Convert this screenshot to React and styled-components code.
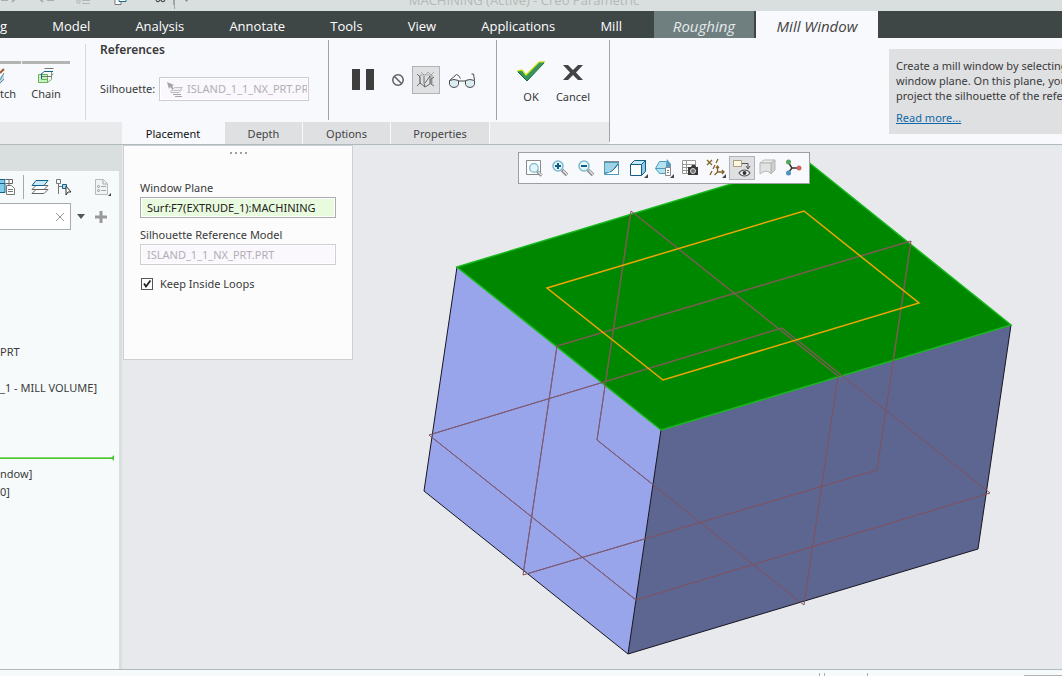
import React, { useState } from "react";
import styled, { createGlobalStyle } from "styled-components";

const GlobalStyle = createGlobalStyle`
  * {
    box-sizing: border-box;
  }

  body {
    margin: 0;
    overflow: hidden;
    font-family: "Noto Sans", "Open Sans", sans-serif;
    font-size: 11px;
    line-height: 16px;
    color: #3a3a3a;
  }

  button,
  input {
    font: inherit;
    color: inherit;
  }

  svg {
    display: block;
    flex: none;
  }
`;

const Page = styled.div`
  display: flex;
  flex-direction: column;
  height: 100vh;
  overflow: hidden;
  background-color: #f8f9fc;
`;

const TitleBar = styled.header`
  position: relative;
  display: flex;
  align-items: flex-end;
  height: 11px;
  flex: none;
  overflow: hidden;
  background-color: #d9dfde;
`;

const Title = styled.div`
  position: absolute;
  left: 0;
  right: 0;
  bottom: 3px;
  padding-right: 14px;
  text-align: center;
  font-family: "Open Sans", sans-serif;
  font-size: 13px;
  line-height: 16px;
  color: #b4b8b7;
`;

const MenuBar = styled.nav`
  display: flex;
  height: 27px;
  flex: none;
  background-color: #3e4646;
`;

const Menus = styled.div`
  display: flex;
  justify-content: space-between;
  width: 654px;
  flex: none;
  padding-right: 32px;
`;

const Menu = styled.button`
  padding: 2px 0 0;
  border: none;
  background: none;
  color: #ffffff;
  font-family: "Open Sans", sans-serif;
  font-size: 13px;
  white-space: nowrap;
  cursor: pointer;
`;

const ContextTab = styled.button`
  width: ${(props) => (props.$active ? "122px" : "102px")};
  padding: 2px 0 0;
  border: none;
  border-right: ${(props) => (props.$active ? "none" : "2px solid #3e4646")};
  background-color: ${(props) => (props.$active ? "#f8f9fc" : "#6f7f80")};
  color: ${(props) => (props.$active ? "#444444" : "#e4eaea")};
  font-family: "Open Sans", sans-serif;
  font-size: 15px;
  font-style: italic;
  white-space: nowrap;
  cursor: pointer;
`;

const Ribbon = styled.section`
  display: flex;
  height: 107px;
  flex: none;
  border-bottom: 1px solid #b0babc;
`;

const Dashboard = styled.div`
  display: flex;
  flex-direction: column;
  width: 609px;
  flex: none;
`;

const Tools = styled.div`
  display: flex;
  height: 84px;
`;

const Divider = styled.div`
  width: 1px;
  margin: ${(props) => props.$inset || "2px"} 0 2px;
  flex: none;
  background-color: ${(props) => props.$color || "#9ea3a6"};
`;

const CurveTools = styled.div`
  display: flex;
  gap: 1px;
  width: 85px;
  padding-top: 23px;
`;

const ToolButton = styled.button`
  display: flex;
  flex-direction: column;
  align-items: ${(props) => props.$align || "center"};
  gap: 2px;
  width: ${(props) => props.$width};
  height: 42px;
  padding: 4px 0 0;
  border: none;
  border-top: 3px solid #b4b4b4;
  background: none;
  white-space: nowrap;
`;

const References = styled.div`
  display: flex;
  flex-direction: column;
  gap: 19px;
  flex: 1;
  padding: 4px 19px 0 14px;
`;

const Heading = styled.h2`
  margin: 0;
  font-size: 12px;
  font-weight: 600;
  line-height: 16px;
`;

const SilhouetteRow = styled.div`
  display: flex;
  align-items: center;
  justify-content: space-between;
`;

const Collector = styled.div`
  display: flex;
  align-items: center;
  gap: 4px;
  width: 150px;
  height: 24px;
  padding: 0 1px 0 7px;
  border: 1px solid #c9cfd1;
  background-color: #faf7fd;
  box-shadow: inset 0 0 0 1px #ffffff;
`;

const CollectorInput = styled.input`
  min-width: 0;
  flex: 1;
  padding: 0;
  border: none;
  outline: none;
  background: none;
  color: #b3aeb5;
`;

const Preview = styled.div`
  display: flex;
  align-items: center;
  width: 167px;
  padding: 0 12px 0 21px;
`;

const IconButton = styled.button`
  display: flex;
  align-items: center;
  justify-content: center;
  width: ${(props) => props.$size || "26px"};
  height: ${(props) => props.$height || props.$size || "26px"};
  flex: none;
  padding: 0;
  border: 1px solid ${(props) => (props.$pressed ? "#b0b3b5" : "transparent")};
  background-color: ${(props) => (props.$pressed ? "#dfe0e2" : "transparent")};
  cursor: pointer;
`;

const Actions = styled.div`
  display: flex;
  gap: 2px;
  flex: none;
  width: 112px;
  padding: 23px 0 0 14px;
`;

const ActionButton = styled.button`
  display: flex;
  flex-direction: column;
  align-items: center;
  gap: 6px;
  width: 40px;
  height: 46px;
  padding: 0;
  border: none;
  background: none;
  cursor: pointer;
`;

const Tabs = styled.div`
  display: flex;
  gap: 1px;
  height: 22px;
  padding-left: 122px;
  background: linear-gradient(to right, #e9eaeb 122px, #f8f9fc 122px);
`;

const Tab = styled.button`
  width: ${(props) => props.$width};
  padding: 2px 0 0;
  border: none;
  background-color: ${(props) => (props.$active ? "#f8f9fc" : "#dfe0e2")};
  color: ${(props) => (props.$active ? "#111111" : "#444444")};
  cursor: pointer;
`;

const TabsRest = styled.div`
  flex: 1;
  background-color: #e9eaeb;
`;

const Help = styled.aside`
  min-width: 0;
  flex: 1;
  height: 85px;
  margin: 11px 0 0 279px;
  padding: 9px 0 0 7px;
  overflow: hidden;
  background-color: #dfe0e2;
  line-height: 15px;
  white-space: nowrap;
`;

const HelpLink = styled.a`
  display: block;
  margin-top: 7px;
  color: #0f67a6;
`;

const Body = styled.main`
  display: flex;
  min-height: 0;
  flex: 1;
`;

const Sidebar = styled.aside`
  display: flex;
  flex-direction: column;
  width: 122px;
  flex: none;
  padding-top: 26px;
  border-right: 3px solid #d9dfde;
  background-color: #f6fafb;
  background-image: linear-gradient(#d9dfde 26px, transparent 26px);
`;

const TreeTools = styled.div`
  display: flex;
  align-items: center;
  height: 32px;
  padding-right: 8px;
`;

const TreeDivider = styled.div`
  width: 1px;
  height: 24px;
  margin: 0 7px;
  background-color: #a5acae;
`;

const Spacer = styled.div`
  flex: 1;
`;

const SearchRow = styled.div`
  display: flex;
  align-items: center;
`;

const SearchBox = styled.div`
  display: flex;
  align-items: center;
  justify-content: flex-end;
  width: 71px;
  height: 27px;
  border: 1px solid #a5acae;
  border-left: none;
  background-color: #ffffff;
`;

const SearchInput = styled.input`
  width: 50px;
  border: none;
  outline: none;
  background: none;
`;

const Tree = styled.ul`
  margin: 0;
  padding: 113px 0 0;
  list-style: none;
`;

const TreeItem = styled.li`
  height: 18px;
  line-height: 18px;
  white-space: pre;
`;

const InsertMark = styled.li`
  display: flex;
  align-items: center;
  height: 14px;
`;

const Viewport = styled.div`
  position: relative;
  min-width: 0;
  flex: 1;
  background-color: #e8e9ed;
`;

const Scene = styled.svg`
  width: 100%;
  height: 100%;
`;

const ViewToolbar = styled.div`
  position: absolute;
  top: 7px;
  left: 396px;
  display: flex;
  align-items: center;
  width: 292px;
  height: 32px;
  padding-left: 2px;
  border: 1px solid #9b9da0;
  background-color: #f8f9fc;
`;

const Panel = styled.form`
  position: absolute;
  top: 0;
  left: 1px;
  display: flex;
  flex-direction: column;
  width: 230px;
  height: 215px;
  padding: 6px 16px 0;
  border: 1px solid #cdd0d3;
  background-color: #fcfcfc;
`;

const Grip = styled.div`
  display: flex;
  justify-content: center;
  gap: 3px;
  height: 28px;
`;

const Dot = styled.span`
  width: 2px;
  height: 2px;
  background-color: #a0a0a0;
`;

const Label = styled.label`
  white-space: nowrap;
`;

const Field = styled.input`
  width: 196px;
  height: 21px;
  margin: 1px 0 9px;
  padding: 0 6px;
  border: 1px solid ${(props) => (props.$active ? "#a9adaf" : "#cdd0d3")};
  outline: none;
  background-color: ${(props) => (props.$active ? "#e9fbde" : "#faf7fd")};
  box-shadow: inset 0 0 0 1px #ffffff;
  color: ${(props) => (props.$active ? "#222222" : "#b3aeb5")};
`;

const CheckRow = styled.div`
  display: flex;
  align-items: center;
  gap: 7px;
  margin-top: 2px;
  padding-left: 1px;
`;

const Checkbox = styled.input`
  appearance: none;
  width: 12px;
  height: 12px;
  margin: 0;
  border: 1px solid #555555;
  background-color: #ffffff;

  &:not(:checked) + svg {
    display: none;
  }
`;

const CheckWrap = styled.span`
  position: relative;
  display: flex;

  svg {
    position: absolute;
    inset: 0;
    pointer-events: none;
  }
`;

const StatusBar = styled.footer`
  display: flex;
  justify-content: flex-end;
  height: 7px;
  flex: none;
  border-top: 1px solid #b0babc;
  background-color: #f6fafb;
`;

const QuickAccessIcons = () => (
    <svg width="200" height="11" viewBox="0 0 200 11" fill="none">
        <path d="M1 0h7M12 2l3-3M40-1l3 3M47 0h7" stroke="#a9aead" strokeWidth="2" />
        <path d="M77 0h3v3h-3zM82 .5h8M82 3.500h8" stroke="#b2b7b6" />
        <path d="M115-1v5.500h6v-3" fill="#fff" stroke="#777" />
        <path d="M119-3h7v4.500h-7z" fill="#fff" stroke="#1b6e96" />
        <path d="M156-1c0 4 4 3 4 0M161-1c0 4 4 3 4 0" stroke="#484e4e" strokeWidth="1.200" />
        <path d="M173.500 0v5M174.500 0v9" stroke="#a0a6a5" />
        <path d="M185 0h3l-1.500 2z" fill="#888" />
    </svg>
);

const SketchIcon = () => (
    <svg width="6" height="16" viewBox="0 0 6 16" fill="none">
        <path d="M0 9l4-3v6l-4 4z" fill="#b8dcec" />
        <path d="M0 5l4-4" stroke="#a8562d" strokeWidth="2" />
        <path d="M0 12l4-7M0 15l4-4" stroke="#6c8790" />
    </svg>
);

const ChainIcon = () => (
    <svg width="16" height="16" viewBox="0 0 16 16" fill="none">
        <path d="M.5 6.500h9v8h-9z" fill="#c9f4bf" stroke="#6eae63" />
        <path d="M9.500 14.500l4-3v-8M3.500 11.500h6M3.500 11.500v-6" stroke="#6eae63" />
        <path d="M3 6.500l3-3h9M3.500 6v5" stroke="#16618a" />
        <path d="M6.500 .5h9M4 8.500h9l2-3" stroke="#787878" />
    </svg>
);

const SurfaceIcon = () => (
    <svg width="16" height="15" viewBox="0 0 16 15" fill="none">
        <path d="M0 0l7 3-2 1 2 3-1 1-3-3-1 2z" fill="#a4a4a4" />
        <path d="M7.500 5.500h8l-3 3h-8z" fill="#ececec" stroke="#c3c3c3" />
        <path d="M4 8.500v2h8l3-3" stroke="#b7b7b7" />
        <path d="M6 12.500h8M8 14.500h7" stroke="#a4a4a4" />
    </svg>
);

const PauseIcon = () => (
    <svg width="26" height="24" viewBox="0 0 26 24">
        <path d="M2 1h8v21H2zM16 1h8v21h-8z" fill="#3e3e3e" />
    </svg>
);

const NoneIcon = () => (
    <svg width="14" height="14" viewBox="0 0 14 14" fill="none" stroke="#5e6062" strokeWidth="1.500">
        <circle cx="7" cy="7" r="5.200" />
        <path d="M3.500 3.500l7 7" />
    </svg>
);

const AttachedIcon = () => (
    <svg width="20" height="18" viewBox="0 0 20 18" fill="none" strokeWidth=".8">
        <path d="M4 4h12M5 1l3 3M9 4l3-3M12 1l3 3M15 4l3-3" stroke="#999" />
        <path d="M4 4v9M16 4v9" stroke="#8a8a8a" />
        <path d="M1 3l3 3v6l-3 3M4 12l5 4 5-3M8 5v7l1 4M9 12l5-7v8M18 6l-3 2v5l3 2" stroke="#4e4e4e" />
    </svg>
);

const GlassesIcon = () => (
    <svg width="28" height="18" viewBox="0 0 28 18" fill="none" stroke="#4b4b4b">
        <path d="M1.500 9.500q4.500-2 9 0v4q-1 3-4.500 3t-4.500-3z" fill="#dcecf3" />
        <path d="M17.500 9.500q4.500-2 9 0v4q-1 3-4.500 3t-4.500-3z" fill="#dcecf3" />
        <path d="M1.500 9.500l7-6 2 1 2 3M10.500 10h7M26.500 9l-1-6h-2" />
    </svg>
);

const OkIcon = () => (
    <svg width="28" height="22" viewBox="0 0 28 22">
        <path d="M0 10l5-1 4 5L22 1l6-.500L10 20z" fill="#38945f" />
        <path d="M0 10l5-1 4 5L22 1h6" fill="none" stroke="#d2e600" strokeWidth="1.200" />
        <path d="M1 11l9 9L27 2" fill="none" stroke="#1c6535" />
    </svg>
);

const CancelIcon = () => (
    <svg width="22" height="22" viewBox="0 0 22 22">
        <path d="M1 4h5l5 5 5-5h5l-7 7.500 7 7.500h-5l-5-5-5 5H1l7-7.500z" fill="#444" />
    </svg>
);

const TreeSettingsIcon = () => (
    <svg width="16" height="18" viewBox="0 0 16 18" fill="none">
        <path d="M-1 1.500h6v13h-6" fill="#7fcdeb" stroke="#16618a" />
        <path d="M0 5.500h5" stroke="#16618a" />
        <path d="M5.500 1.500h7v4h-7M9 2v5" fill="#fff" stroke="#666" />
        <path d="M6.500 7.500h5l3 3v6h-8z" fill="#fff" stroke="#777" />
        <path d="M8 11.500h5M8 13.500h5" stroke="#777" />
    </svg>
);

const LayersIcon = () => (
    <svg width="18" height="18" viewBox="0 0 18 18" fill="none" stroke="#666">
        <path d="M1 15.500l4-4h12l-4 4zM1 11.500l4-4h12l-4 4z" fill="#fff" />
        <path d="M1 7.500l4-5h12l-4 5z" fill="#c9e9f6" stroke="#16618a" />
    </svg>
);

const SelectTreeIcon = () => (
    <svg width="18" height="18" viewBox="0 0 18 18" fill="none" stroke="#777">
        <path d="M1.500 1.500h4v4h-4zM3.500 6v10M4 8.500h3" />
        <path d="M7.500 6.500h4v4h-4z" fill="#aadcf0" stroke="#16618a" />
        <path d="M11 8l5 6h-3l-2 3z" fill="#fff" stroke="#333" />
    </svg>
);

const ShowListIcon = () => (
    <svg width="18" height="20" viewBox="0 0 18 20" fill="none">
        <path d="M2.500 2.500h8l4 4v11h-12z" fill="#f2f4f4" stroke="#b7bbbc" />
        <path d="M10 3v4h4M8 9.500h5M8 13.500h5" stroke="#a2a8aa" />
        <circle cx="5.500" cy="9.500" r="1" stroke="#8b9396" />
        <circle cx="5.500" cy="13.500" r="1" stroke="#8b9396" />
        <path d="M18 16v3h-3z" fill="#444" />
    </svg>
);

const Lens = ({ sign }) => (
    <g>
        <path d="M11 11l5 5" stroke="#8a8a8a" strokeWidth="3.500" />
        <path d="M12 11.500l4 4" stroke="#e5e5e5" strokeWidth="1.500" />
        <circle cx="7" cy="7" r="5" fill="#e4f6fc" stroke="#7cbacf" strokeWidth="1.500" />
        {sign && <path d={sign} stroke="#125e86" strokeWidth="2" />}
    </g>
);

const viewIcons = [
    { name: "Refit", art: <g><path d="M1.500 1.500h14v14h-14z" fill="#fff" stroke="#8a8a8a" /><g transform="translate(3 3) scale(.85)"><Lens /></g></g> },
    { name: "Zoom In", art: <Lens sign="M4 7h6M7 4v6" /> },
    { name: "Zoom Out", art: <Lens sign="M4 7h6" /> },
    { name: "Repaint", art: <g><path d="M1 2h15v14H1z" fill="#4f9cba" /><path d="M2 4h13L8 13H2z" fill="#9fd3e8" /><path d="M2 15c6-1 10-5 13-10v10z" fill="#fff" /><path d="M7 13c4-2 6-5 8-8" stroke="#176686" /><path d="M1 2.500h15" stroke="#8a8a8a" /></g> },
    { name: "Display Style", menu: true, art: <g stroke="#145f85"><path d="M1.500 5.500l4-4h11l-4 4z" fill="#c6eaf7" /><path d="M12.500 5.500l4-4v11l-4 4z" fill="#8ccbe3" /><path d="M1.500 5.500h11v11h-11z" fill="#fff" /></g> },
    { name: "Saved Orientations", menu: true, art: <g><path d="M.5 9.500l4-7h7l4 7-3 5h-8z" fill="#b5e2f2" stroke="#4a9dbc" /><path d="M.5 9.500h15" stroke="#4a9dbc" /><path d="M12 0l4 5v4h-5V5z" fill="#5a9dbf" /><path d="M10.500 8.500h5v8h-5z" fill="#fff" stroke="#888" /><path d="M12 11.500h2M12 13.500h2" stroke="#777" /></g> },
    { name: "View Manager", art: <g><path d="M1.500 1.500h13v13h-13zM2 5.500h12M2 8.500h12M2 11.500h12M5.500 2v12" fill="#fff" stroke="#999" /><path d="M7 8h3l1-2h3l1 2h2v8H7z" fill="#383838" /><circle cx="12" cy="12" r="2.500" fill="#777" stroke="#ddd" /></g> },
    { name: "Datum Display", menu: true, art: <g stroke="#836427" strokeWidth="1.300"><path d="M0 1l5 5M5 1L0 6" /><path d="M11 0L9 4M8 6l-2 4M5 12l-2 4" /><path d="M10.500 7v6h6M10.500 13l-3 3M9 9l1.500-2L12 9M15 11l2 2-2 2" /></g> },
    { name: "Annotation Display", pressed: true, art: <g><path d="M.5 1.500h8v6h-8z" fill="#fff7df" stroke="#ab9f83" /><path d="M9 4.500h6v5M13 7l2 3 2-3" stroke="#555" /><path d="M6 14c3-4 8-4 11 0-3 4-8 4-11 0z" fill="#fff" stroke="#555" strokeWidth="1.200" /><circle cx="11.500" cy="14" r="2" fill="#333" /></g> },
    { name: "Section", art: <g stroke="#b5b5b5"><path d="M1 4l4-3h11l-4 3z" fill="#efefef" /><path d="M12 4l4-3v10l-4 4z" fill="#cfcfcf" /><path d="M1 4h11v11c-2-4-8-3-11 0z" fill="#e2e2e2" /></g> },
    { name: "Spin Center", art: <g><path d="M3 3l4 6M7 9h7M7 9l-4 5" stroke="#333" strokeWidth="1.400" /><circle cx="3.500" cy="3" r="2.500" fill="#55a65b" /><circle cx="14" cy="9" r="2.500" fill="#d46463" /><circle cx="3.500" cy="14" r="2.500" fill="#4b93c2" /></g> },
];

const Model = () => (
    <Scene viewBox="122 145 940 524" fill="none" role="img" aria-label="Mill window on workpiece">
        <defs>
            <clipPath id="topFace">
                <path d="M457 267L807 161L1011 325L661 430z" />
            </clipPath>
            <clipPath id="leftFace">
                <path d="M457 267L661 430L628 654L424 491z" />
            </clipPath>
            <g id="datums">
                <path d="M631 211L838 376L804 605L597 440z" />
                <path d="M911 241L557 346L523 575L877 470z" />
                <path d="M429 435L782 328L990 493L636 600z" />
            </g>
        </defs>
        <path d="M457 267L661 430L628 654L424 491z" fill="#98a5eb" />
        <path d="M661 430L1011 325L978 549L628 654z" fill="#5d6591" />
        <path d="M457 267L424 491L628 654L978 549L1011 325M661 430L628 654" stroke="#16161f" />
        <path d="M457 267L807 161L1011 325L661 430z" fill="#008700" stroke="#16b91b" strokeWidth="1.500" />
        <use href="#datums" stroke="#82505a" />
        <use href="#datums" stroke="#7b5d79" clipPath="url(#leftFace)" />
        <use href="#datums" stroke="#73604a" strokeWidth="1.500" clipPath="url(#topFace)" />
        <path d="M547 288L804 211L919 303L663 380z" stroke="#f1a500" strokeWidth="1.500" />
    </Scene>
);

const menus = ["g", "Model", "Analysis", "Annotate", "Tools", "View", "Applications", "Mill"];

const tabs = [
    { name: "Placement", width: "102px" },
    { name: "Depth", width: "77px" },
    { name: "Options", width: "87px" },
    { name: "Properties", width: "98px" },
];

const App = () => {
    const [tab, setTab] = useState("Placement");
    const [loops, setLoops] = useState(true);

    return (
        <Page>
            <GlobalStyle />
            <TitleBar>
                <QuickAccessIcons />
                <Title>MACHINING (Active) - Creo Parametric</Title>
            </TitleBar>
            <MenuBar>
                <Menus>
                    {menus.map((name) => (
                        <Menu key={name}>{name}</Menu>
                    ))}
                </Menus>
                <ContextTab>Roughing</ContextTab>
                <ContextTab $active>Mill Window</ContextTab>
            </MenuBar>
            <Ribbon>
                <Dashboard>
                    <Tools>
                        <CurveTools>
                            <ToolButton $width="21px" $align="flex-start">
                                <SketchIcon />
                                tch
                            </ToolButton>
                            <ToolButton $width="48px">
                                <ChainIcon />
                                Chain
                            </ToolButton>
                        </CurveTools>
                        <Divider $inset="6px" $color="#d7dadd" />
                        <References>
                            <Heading>References</Heading>
                            <SilhouetteRow>
                                <Label htmlFor="silhouette">Silhouette:</Label>
                                <Collector>
                                    <SurfaceIcon />
                                    <CollectorInput id="silhouette" readOnly value="ISLAND_1_1_NX_PRT.PRT" />
                                </Collector>
                            </SilhouetteRow>
                        </References>
                        <Divider />
                        <Preview>
                            <IconButton aria-label="Pause"><PauseIcon /></IconButton>
                            <Spacer />
                            <IconButton $size="28px" aria-label="No preview"><NoneIcon /></IconButton>
                            <IconButton $size="28px" $pressed aria-label="Attached preview"><AttachedIcon /></IconButton>
                            <IconButton $size="44px" aria-label="Verify"><GlassesIcon /></IconButton>
                        </Preview>
                        <Divider />
                        <Actions>
                            <ActionButton><OkIcon />OK</ActionButton>
                            <ActionButton><CancelIcon />Cancel</ActionButton>
                        </Actions>
                    </Tools>
                    <Tabs>
                        {tabs.map((item) => (
                            <Tab
                                key={item.name}
                                $width={item.width}
                                $active={tab === item.name}
                                onClick={() => setTab(item.name)}
                            >
                                {item.name}
                            </Tab>
                        ))}
                        <TabsRest />
                    </Tabs>
                </Dashboard>
                <Divider />
                <Help>
                    Create a mill window by selecting<br />
                    window plane. On this plane, you<br />
                    project the silhouette of the refer
                    <HelpLink href="#help">Read more...</HelpLink>
                </Help>
            </Ribbon>
            <Body>
                <Sidebar>
                    <TreeTools>
                        <TreeSettingsIcon />
                        <TreeDivider />
                        <LayersIcon />
                        <IconButton $size="30px" aria-label="Select in tree"><SelectTreeIcon /></IconButton>
                        <Spacer />
                        <ShowListIcon />
                    </TreeTools>
                    <SearchRow>
                        <SearchBox>
                            <SearchInput aria-label="Search tree" />
                            <IconButton $size="20px" aria-label="Clear">
                                <svg width="8" height="8" viewBox="0 0 8 8" stroke="#999">
                                    <path d="M0 0l8 8M8 0L0 8" />
                                </svg>
                            </IconButton>
                        </SearchBox>
                        <IconButton $size="20px" aria-label="Search options">
                            <svg width="8" height="5" viewBox="0 0 8 5">
                                <path d="M0 0h8L4 5z" fill="#555" />
                            </svg>
                        </IconButton>
                        <IconButton $size="20px" aria-label="Add">
                            <svg width="12" height="12" viewBox="0 0 12 12">
                                <path d="M0 6h12M6 0v12" stroke="#999" strokeWidth="3" />
                            </svg>
                        </IconButton>
                    </SearchRow>
                    <Tree>
                        <TreeItem>PRT</TreeItem>
                        <TreeItem />
                        <TreeItem>_1 - MILL VOLUME]</TreeItem>
                        <TreeItem />
                        <TreeItem />
                        <TreeItem />
                        <InsertMark>
                            <svg width="114" height="6" viewBox="0 0 114 6">
                                <path d="M0 2.500h112" stroke="#86d96f" />
                                <path d="M0 3.500h112" stroke="#49c52e" />
                                <path d="M114 0v6l-3-3z" fill="#49c52e" />
                            </svg>
                        </InsertMark>
                        <TreeItem>ndow]</TreeItem>
                        <TreeItem>0]</TreeItem>
                    </Tree>
                </Sidebar>
                <Viewport>
                    <Model />
                    <ViewToolbar>
                        {viewIcons.map((icon) => (
                            <IconButton
                                key={icon.name}
                                $size="26px"
                                $height="24px"
                                $pressed={icon.pressed}
                                aria-label={icon.name}
                            >
                                <svg width="20" height="20" viewBox="-1 -1 20 20" fill="none">
                                    {icon.art}
                                    {icon.menu && <path d="M19 15v4h-4z" fill="#444" />}
                                </svg>
                            </IconButton>
                        ))}
                    </ViewToolbar>
                    <Panel>
                        <Grip>
                            <Dot />
                            <Dot />
                            <Dot />
                            <Dot />
                        </Grip>
                        <Label htmlFor="plane">Window Plane</Label>
                        <Field id="plane" $active readOnly value="Surf:F7(EXTRUDE_1):MACHINING" />
                        <Label htmlFor="model">Silhouette Reference Model</Label>
                        <Field id="model" readOnly value="ISLAND_1_1_NX_PRT.PRT" />
                        <CheckRow>
                            <CheckWrap>
                                <Checkbox
                                    id="loops"
                                    type="checkbox"
                                    checked={loops}
                                    onChange={(e) => setLoops(e.target.checked)}
                                />
                                <svg width="12" height="12" viewBox="0 0 12 12" fill="none">
                                    <path d="M3 5.500l2 3 4.500-6" stroke="#222" strokeWidth="1.800" />
                                </svg>
                            </CheckWrap>
                            <Label htmlFor="loops">Keep Inside Loops</Label>
                        </CheckRow>
                    </Panel>
                </Viewport>
            </Body>
            <StatusBar>
                <svg width="244" height="6" viewBox="0 0 244 6">
                    <path d="M1.500 3v3M6.500 3v3M49.500 3v3M206 5.500h38" stroke="#adb2b3" />
                </svg>
            </StatusBar>
        </Page>
    );
};

export default App;
